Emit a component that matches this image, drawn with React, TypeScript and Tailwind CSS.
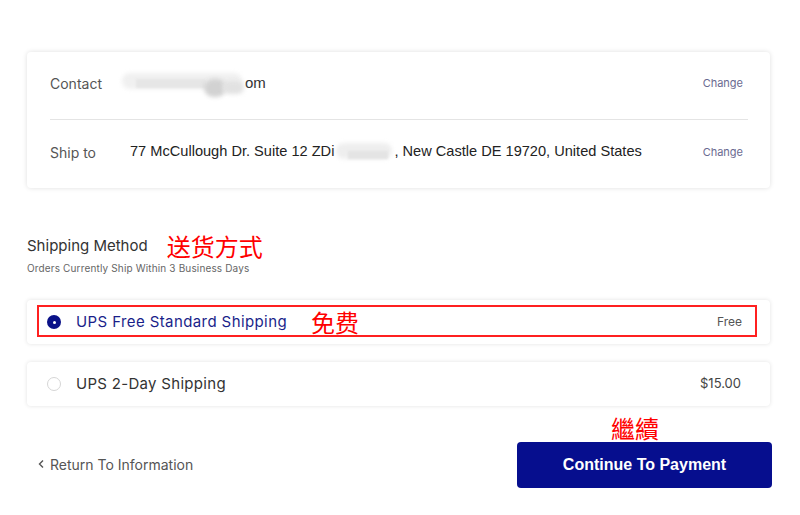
import React from "react";

const inter = { fontFamily: "Inter, 'Noto Sans', sans-serif" };

export default function App() {
  return (
    <div className="w-[800px] h-[515px] bg-white overflow-hidden" style={inter}>
      <div className="ml-[27px] w-[743px] pt-[52px]">
        {/* Info card */}
        <div className="rounded-[4px] bg-white shadow-[0_0_5px_rgba(0,0,0,0.13)] pl-[23px] pr-[22px]">
          <div className="h-[68px] flex items-center border-b border-[#e4e4e4] pb-[4px]">
            <div className="w-[72px] text-[14px] text-[#555]">Contact</div>
            <div className="flex-1 flex items-center text-[15px] text-[#333]" style={{ fontFamily: "'Liberation Sans', Arial, sans-serif" }}>
              <div className="relative w-[123px] h-[22px]">
                <div className="absolute left-0 top-[0px] w-[120px] h-[16px] rounded-full bg-[#f0f0f0] blur-[2px]" />
                <div className="absolute left-[14px] top-[6px] w-[70px] h-[9px] bg-[#e6e6e6] blur-[1px]" />
                <div className="absolute left-[82px] top-[6px] w-[22px] h-[18px] rounded-full bg-[#d2d2d2] blur-[2px]" />
                <div className="absolute left-[100px] top-[8px] w-[22px] h-[13px] rounded-full bg-[#e2e2e2] blur-[2px]" />
              </div>
              <span>om</span>
            </div>
            <div className="mr-[5px] text-[11px] text-[#6a6a90]">Change</div>
          </div>
          <div className="h-[68px] flex items-center pb-[4px]">
            <div className="w-[80px] text-[14px] text-[#555]">Ship to</div>
            <div className="flex-1 flex items-center text-[14.6px] text-[#222]" style={{ fontFamily: "'Liberation Sans', Arial, sans-serif" }}>
              <span>77 McCullough Dr. Suite 12 ZDi</span>
              <div className="relative w-[60px] h-[20px]">
                <div className="absolute left-[2px] top-[1px] w-[56px] h-[16px] rounded-full bg-[#eeeeee] blur-[2px]" />
                <div className="absolute left-[14px] top-[9px] w-[40px] h-[8px] bg-[#e4e4e4] blur-[1px]" />
              </div>
              <span>, New Castle DE 19720, United States</span>
            </div>
            <div className="mr-[5px] text-[11px] text-[#6a6a90]">Change</div>
          </div>
        </div>

        {/* Shipping method heading */}
        <div className="mt-[44px] flex items-center h-[28px]">
          <span className="text-[15px] text-[#333]">Shipping Method</span>
          <span
            className="ml-[19px] text-[24px] text-[#ff0000] leading-none"
            style={{ fontFamily: "'Noto Sans CJK SC', sans-serif" }}
          >
            送货方式
          </span>
        </div>
        <div className="mt-[1px] text-[10px] tracking-[0.15px] text-[#666]">Orders Currently Ship Within 3 Business Days</div>

        {/* Options */}
        <div className="mt-[24px] flex flex-col gap-[18px]">
          <div className="relative h-[44px] rounded-[4px] bg-white shadow-[0_0_4px_rgba(0,0,0,0.12)] flex items-center pl-[20px] pr-[28px]">
            <div className="w-[14px] h-[14px] rounded-full bg-[#0a1188] flex items-center justify-center">
              <div className="w-[3px] h-[3px] rounded-full bg-white" />
            </div>
            <span className="ml-[15px] text-[15px] tracking-[0.4px] text-[#1a1f8a]">UPS Free Standard Shipping</span>
            <span
              className="ml-[24px] text-[24px] text-[#ff0000] leading-none"
              style={{ fontFamily: "'Noto Sans CJK SC', sans-serif" }}
            >
              免费
            </span>
            <span className="ml-auto text-[12px] text-[#555]">Free</span>
            <div className="absolute left-[10px] top-[5px] right-[13px] bottom-[7px] border-2 border-[#ff2020]" />
          </div>
          <div className="h-[44px] rounded-[4px] bg-white shadow-[0_0_4px_rgba(0,0,0,0.12)] flex items-center pl-[20px] pr-[29px]">
            <div className="w-[14px] h-[14px] rounded-full border border-[#d6d6d6]" />
            <span className="ml-[15px] text-[15px] tracking-[0.3px] text-[#333]">UPS 2-Day Shipping</span>
            <span className="ml-auto text-[13px] text-[#444]">$15.00</span>
          </div>
        </div>

        {/* Bottom actions */}
        <div className="mt-[10px] flex items-end justify-between">
          <div className="flex items-center h-[46px] pl-[10px] pb-[2px] text-[14px] text-[#555]">
            <svg width="8" height="10" viewBox="0 0 8 10" className="mr-[5px]">
              <path d="M6 1.5 L2.5 5 L6 8.5" fill="none" stroke="#555" strokeWidth="1.4" />
            </svg>
            Return To Information
          </div>
          <div className="flex flex-col mr-[-2px]">
            <span
              className="ml-[94px] text-[24px] leading-none text-[#ff0000] mb-[2px]"
              style={{ fontFamily: "'Noto Sans CJK TC', sans-serif" }}
            >
              繼續
            </span>
            <div
              className="w-[255px] h-[46px] rounded-[4px] bg-[#060e8e] flex items-center justify-center text-white text-[16px] font-bold"
              style={{ fontFamily: "'Liberation Sans', Arial, sans-serif" }}
            >
              Continue To Payment
            </div>
          </div>
        </div>
      </div>
    </div>
  );
}
